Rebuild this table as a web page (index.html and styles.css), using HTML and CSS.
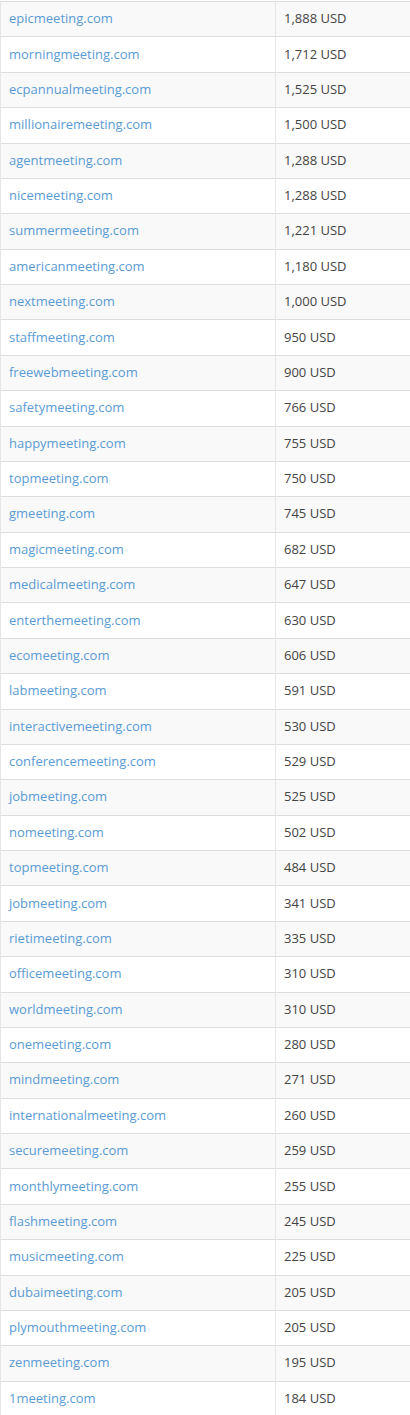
FILE: index.html
```html
<!DOCTYPE html>
<html>
<head>
<meta charset="utf-8">
<link rel="stylesheet" href="styles.css">
</head>
<body>
<table class="domains">
<tbody>
<tr><td><a href="#">epicmeeting.com</a></td><td>1,888 USD</td></tr>
<tr><td><a href="#">morningmeeting.com</a></td><td>1,712 USD</td></tr>
<tr><td><a href="#">ecpannualmeeting.com</a></td><td>1,525 USD</td></tr>
<tr><td><a href="#">millionairemeeting.com</a></td><td>1,500 USD</td></tr>
<tr><td><a href="#">agentmeeting.com</a></td><td>1,288 USD</td></tr>
<tr><td><a href="#">nicemeeting.com</a></td><td>1,288 USD</td></tr>
<tr><td><a href="#">summermeeting.com</a></td><td>1,221 USD</td></tr>
<tr><td><a href="#">americanmeeting.com</a></td><td>1,180 USD</td></tr>
<tr><td><a href="#">nextmeeting.com</a></td><td>1,000 USD</td></tr>
<tr><td><a href="#">staffmeeting.com</a></td><td>950 USD</td></tr>
<tr><td><a href="#">freewebmeeting.com</a></td><td>900 USD</td></tr>
<tr><td><a href="#">safetymeeting.com</a></td><td>766 USD</td></tr>
<tr><td><a href="#">happymeeting.com</a></td><td>755 USD</td></tr>
<tr><td><a href="#">topmeeting.com</a></td><td>750 USD</td></tr>
<tr><td><a href="#">gmeeting.com</a></td><td>745 USD</td></tr>
<tr><td><a href="#">magicmeeting.com</a></td><td>682 USD</td></tr>
<tr><td><a href="#">medicalmeeting.com</a></td><td>647 USD</td></tr>
<tr><td><a href="#">enterthemeeting.com</a></td><td>630 USD</td></tr>
<tr><td><a href="#">ecomeeting.com</a></td><td>606 USD</td></tr>
<tr><td><a href="#">labmeeting.com</a></td><td>591 USD</td></tr>
<tr><td><a href="#">interactivemeeting.com</a></td><td>530 USD</td></tr>
<tr><td><a href="#">conferencemeeting.com</a></td><td>529 USD</td></tr>
<tr><td><a href="#">jobmeeting.com</a></td><td>525 USD</td></tr>
<tr><td><a href="#">nomeeting.com</a></td><td>502 USD</td></tr>
<tr><td><a href="#">topmeeting.com</a></td><td>484 USD</td></tr>
<tr><td><a href="#">jobmeeting.com</a></td><td>341 USD</td></tr>
<tr><td><a href="#">rietimeeting.com</a></td><td>335 USD</td></tr>
<tr><td><a href="#">officemeeting.com</a></td><td>310 USD</td></tr>
<tr><td><a href="#">worldmeeting.com</a></td><td>310 USD</td></tr>
<tr><td><a href="#">onemeeting.com</a></td><td>280 USD</td></tr>
<tr><td><a href="#">mindmeeting.com</a></td><td>271 USD</td></tr>
<tr><td><a href="#">internationalmeeting.com</a></td><td>260 USD</td></tr>
<tr><td><a href="#">securemeeting.com</a></td><td>259 USD</td></tr>
<tr><td><a href="#">monthlymeeting.com</a></td><td>255 USD</td></tr>
<tr><td><a href="#">flashmeeting.com</a></td><td>245 USD</td></tr>
<tr><td><a href="#">musicmeeting.com</a></td><td>225 USD</td></tr>
<tr><td><a href="#">dubaimeeting.com</a></td><td>205 USD</td></tr>
<tr><td><a href="#">plymouthmeeting.com</a></td><td>205 USD</td></tr>
<tr><td><a href="#">zenmeeting.com</a></td><td>195 USD</td></tr>
<tr><td><a href="#">1meeting.com</a></td><td>184 USD</td></tr>
</tbody>
</table>
</body>
</html>
```
FILE: styles.css
```css
html, body {
  margin: 0;
  padding: 0;
  background: #fff;
}
body {
  font-family: "Open Sans", "Liberation Sans", sans-serif;
  font-size: 13px;
  color: #444;
}
.domains {
  width: 410px;
  border-collapse: collapse;
  table-layout: fixed;
  margin-top: 1px;
}
.domains td {
  height: 35.38px;
  box-sizing: border-box;
  padding: 0 8px 2px;
  line-height: 18px;
  vertical-align: middle;
  border-top: 1px solid #ddd;
  border-left: 1px solid #e6e6e6;
}
.domains td:first-child {
  width: 275px;
}
.domains tr:nth-child(odd) td {
  background: #f9f9f9;
}
.domains a {
  color: #5a9bd5;
  text-decoration: none;
}
```
